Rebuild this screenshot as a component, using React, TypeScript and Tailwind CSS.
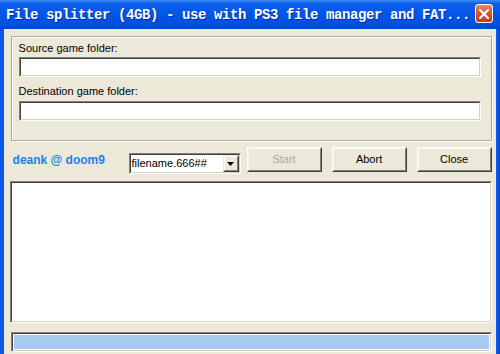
const ui = { fontFamily: '"Liberation Sans", Arial, sans-serif' };

/** Classic 2px sunken edge, used by edits, the log box and the progress bar. */
function Sunken({ className = "", children }: { className?: string; children?: React.ReactNode }) {
  return (
    <div className={`border border-t-[#808080] border-l-[#808080] border-b-white border-r-white ${className}`}>
      <div className="h-full border border-t-[#404040] border-l-[#404040] border-b-[#d4d0c8] border-r-[#d4d0c8] bg-white">
        {children}
      </div>
    </div>
  );
}

function Button({ label, disabled }: { label: string; disabled?: boolean }) {
  return (
    <div className="h-[25px] w-[75px] border border-t-white border-l-white border-b-[#404040] border-r-[#404040]">
      <div
        className={`flex h-full items-center justify-center border border-t-[#f5f4ee] border-l-[#f5f4ee] border-b-[#808080] border-r-[#808080] bg-[#ece9d8] text-[11px] ${
          disabled ? "text-[#aca899]" : "text-black"
        }`}
      >
        {label}
      </div>
    </div>
  );
}

function Combo({ value }: { value: string }) {
  return (
    <Sunken className="mt-[6px] h-[21px] w-[112px]">
      <div className="flex h-full items-center">
        <span className="flex-1 pl-[1px] text-[11px] leading-[13px] text-black">{value}</span>
        <div className="h-full w-[16px] border border-t-[#ece9d8] border-l-[#ece9d8] border-b-[#404040] border-r-[#404040]">
          <div className="flex h-full items-center justify-center border border-t-white border-l-white border-b-[#808080] border-r-[#808080] bg-[#ece9d8]">
            <svg width="7" height="4" viewBox="0 0 7 4">
              <path d="M0 0h7L3.5 4z" fill="#000" />
            </svg>
          </div>
        </div>
      </div>
    </Sunken>
  );
}

export default function App() {
  return (
    <div className="flex h-[354px] w-[500px] flex-col overflow-hidden" style={ui}>
      {/* title bar */}
      <div className="flex h-[29px] shrink-0 items-start bg-[linear-gradient(180deg,#3f8cf3_0%,#0b5fe9_12%,#0055e6_55%,#0050e0_85%,#0045d2_100%)] pl-[6px] pr-[7px]">
        <span
          className="flex-1 whitespace-nowrap pt-[7px] text-[14px] font-bold leading-[16px] tracking-[-0.4px] text-white [text-shadow:1px_1px_0_#0b2a9a]"
          style={{ fontFamily: '"Liberation Mono", "Courier New", monospace' }}
        >
          File splitter (4GB) - use with PS3 file manager and FAT...
        </span>
        <div className="mt-[4px] flex h-[19px] w-[18px] items-center justify-center rounded-[3px] border border-white bg-[linear-gradient(180deg,#ec8a6c_0%,#dc5530_45%,#c83c17_100%)]">
          <svg width="10" height="10" viewBox="0 0 10 10">
            <path d="M1 1l8 8M9 1l-8 8" stroke="#fff" strokeWidth="2.2" strokeLinecap="square" />
          </svg>
        </div>
      </div>

      <div className="flex flex-1">
        <div className="w-[4px] bg-[#0a58e6]" />
        <div className="flex flex-1 flex-col bg-[#ece9d8] pl-[6px] pr-[4px] pt-[7px]">
          {/* folder group */}
          <div className="ml-[1px] h-[105px] border border-[#aca899] pl-[7px] pr-[10px] pt-[5px] shadow-[inset_1px_1px_0_#fff,1px_1px_0_#fff]">
            <div className="text-[11px] leading-[13px] text-black">Source game folder:</div>
            <Sunken className="mt-[2px] h-[20px]" />
            <div className="mt-[8px] text-[11px] leading-[13px] text-black">Destination game folder:</div>
            <Sunken className="mt-[3px] h-[20px]" />
          </div>

          {/* controls row */}
          <div className="mt-[6px] flex h-[25px] items-start">
            <div className="mt-[6px] w-[119px] pl-[3px] text-[12px] font-bold leading-[15px] text-[#1e80e6]">
              deank @ doom9
            </div>
            <Combo value="filename.666##" />
            <div className="ml-[6px] flex gap-[10px]">
              <Button label="Start" disabled />
              <Button label="Abort" />
              <Button label="Close" />
            </div>
          </div>

          {/* log */}
          <Sunken className="mt-[9px] h-[142px]" />

          {/* progress */}
          <div className="ml-[1px] mt-[9px] h-[20px] border border-t-[#808080] border-l-[#808080] border-b-white border-r-white">
            <div className="h-full border border-t-[#404040] border-l-[#404040] border-b-[#d4d0c8] border-r-[#d4d0c8] bg-white p-[1px]">
              <div className="h-full bg-[#a6caf0]" />
            </div>
          </div>
        </div>
        <div className="w-[5px] bg-[linear-gradient(90deg,#0a58e6_0%,#0a58e6_60%,#0033b8_100%)]" />
      </div>
    </div>
  );
}
